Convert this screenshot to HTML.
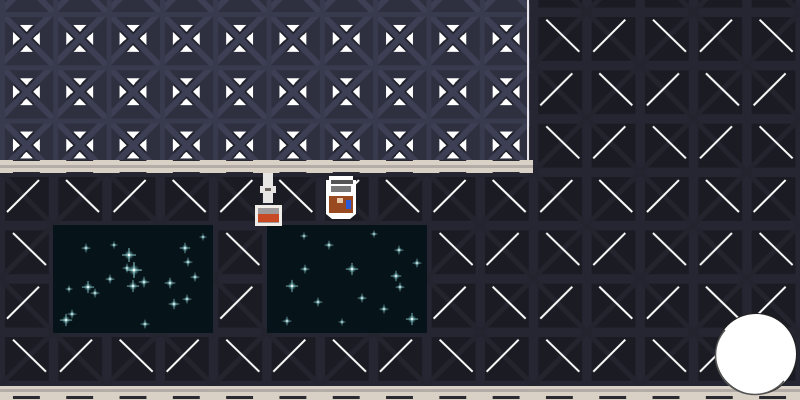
<!DOCTYPE html>
<html><head><style>html,body{margin:0;padding:0;background:#1c1c25;overflow:hidden}svg{display:block}</style></head>
<body>
<svg width="800" height="400" viewBox="0 0 800 400" xmlns="http://www.w3.org/2000/svg" shape-rendering="crispEdges">
<defs>
<pattern id="dark" x="0" y="-41.3" width="106.66" height="106.66" patternUnits="userSpaceOnUse">
<rect width="106.66" height="106.66" fill="#262632"/>
<g fill="#1b1b23">
<rect x="5" y="5" width="44" height="44"/><rect x="58.3" y="5" width="44" height="44"/>
<rect x="5" y="58.3" width="44" height="44"/><rect x="58.3" y="58.3" width="44" height="44"/>
</g>
<g stroke="#24242f" stroke-width="5" shape-rendering="auto">
<line x1="0" y1="0" x2="53.3" y2="53.3"/><line x1="106.6" y1="0" x2="53.3" y2="53.3"/>
<line x1="0" y1="106.6" x2="53.3" y2="53.3"/><line x1="106.6" y1="106.6" x2="53.3" y2="53.3"/>
</g>
<g stroke="#fff" stroke-width="2" shape-rendering="auto">
<line x1="39" y1="8" x2="7" y2="40"/>
<line x1="66" y1="8" x2="99" y2="40"/>
<line x1="13" y1="61" x2="46" y2="93"/>
<line x1="92" y1="61" x2="60" y2="93"/>
</g>
</pattern>
<pattern id="top" x="0" y="-41.3" width="53.3" height="53.3" patternUnits="userSpaceOnUse">
<rect width="53.3" height="53.3" fill="#2e3040"/>
<rect x="14" y="14" width="25" height="25" fill="#1f2029"/>
<g stroke="#3d3f55" stroke-width="6" shape-rendering="auto"><line x1="0" y1="0" x2="53.3" y2="53.3"/><line x1="53.3" y1="0" x2="0" y2="53.3"/></g>
<g fill="#fff"><path d="M20 13h13l-6.5 7z"/><path d="M20 40h13l-6.5-7z"/><path d="M13 20v13l7-6.5z"/><path d="M40 20v13l-7-6.5z"/></g>
<rect x="0" y="0" width="53.3" height="5" fill="#383a4e"/>
<rect x="0" y="0" width="5" height="53.3" fill="#383a4e"/>
</pattern>
<pattern id="floor" x="0" y="0" width="53.3" height="14" patternUnits="userSpaceOnUse">
<rect width="53.3" height="14" fill="#d9d1c6"/>
<rect x="13" y="4" width="27" height="3" fill="#2a2a30"/>
<rect x="0" y="11" width="53.3" height="3" fill="#b4aca6"/>
</pattern>
<radialGradient id="glow"><stop offset="0" stop-color="#d0fafa" stop-opacity="1"/><stop offset="1" stop-color="#3a8a90" stop-opacity="0"/></radialGradient>
<symbol id="s" viewBox="-8 -8 16 16" overflow="visible"><circle r="5" fill="url(#glow)"/><path d="M0 -7V7M-7 0H7" stroke="#a8eef0" stroke-width="1" opacity=".8"/><rect x="-1" y="-1" width="2" height="2" fill="#fff"/></symbol>
</defs>
<rect width="800" height="400" fill="url(#dark)"/>
<rect x="0" y="0" width="530" height="160" fill="url(#top)"/>
<rect x="527" y="0" width="2" height="160" fill="#e8e4ea"/>
<rect x="0" y="160" width="533" height="13" fill="url(#floor)"/>
<rect x="0" y="386" width="800" height="14" fill="url(#floor)"/>
<g fill="#061318">
<rect x="53" y="225" width="160" height="108"/>
<rect x="267" y="225" width="160" height="108"/>
</g>
<g shape-rendering="auto">
<use href="#s" x="122" y="263" width="10" height="10"/>
<use href="#s" x="81" y="243" width="10" height="10"/>
<use href="#s" x="121" y="247" width="16" height="16"/>
<use href="#s" x="125" y="261" width="18" height="18"/>
<use href="#s" x="81" y="280" width="14" height="14"/>
<use href="#s" x="126" y="279" width="14" height="14"/>
<use href="#s" x="138" y="276" width="12" height="12"/>
<use href="#s" x="90" y="288" width="10" height="10"/>
<use href="#s" x="59" y="313" width="14" height="14"/>
<use href="#s" x="67" y="309" width="10" height="10"/>
<use href="#s" x="105" y="274" width="10" height="10"/>
<use href="#s" x="179" y="242" width="12" height="12"/>
<use href="#s" x="182" y="294" width="10" height="10"/>
<use href="#s" x="168" y="298" width="12" height="12"/>
<use href="#s" x="164" y="277" width="12" height="12"/>
<use href="#s" x="183" y="257" width="10" height="10"/>
<use href="#s" x="190" y="272" width="10" height="10"/>
<use href="#s" x="110" y="241" width="8" height="8"/>
<use href="#s" x="140" y="319" width="10" height="10"/>
<use href="#s" x="199" y="233" width="8" height="8"/>
<use href="#s" x="65" y="285" width="8" height="8"/>
<use href="#s" x="285" y="279" width="14" height="14"/>
<use href="#s" x="300" y="264" width="10" height="10"/>
<use href="#s" x="345" y="262" width="14" height="14"/>
<use href="#s" x="357" y="293" width="10" height="10"/>
<use href="#s" x="390" y="270" width="12" height="12"/>
<use href="#s" x="394" y="245" width="10" height="10"/>
<use href="#s" x="324" y="240" width="10" height="10"/>
<use href="#s" x="379" y="304" width="10" height="10"/>
<use href="#s" x="405" y="312" width="14" height="14"/>
<use href="#s" x="282" y="316" width="10" height="10"/>
<use href="#s" x="313" y="297" width="10" height="10"/>
<use href="#s" x="370" y="230" width="8" height="8"/>
<use href="#s" x="412" y="258" width="10" height="10"/>
<use href="#s" x="338" y="318" width="8" height="8"/>
<use href="#s" x="300" y="232" width="8" height="8"/>
<use href="#s" x="395" y="282" width="10" height="10"/>
</g>
<rect x="263" y="173" width="10" height="30" fill="#e8e6e4"/>
<rect x="260" y="186" width="16" height="7" fill="#e8e6e4"/><rect x="265" y="188" width="6" height="3" fill="#6a6460"/>
<rect x="255" y="205" width="27" height="21" fill="#f0ece8"/><rect x="258" y="208" width="21" height="15" fill="#9e9a9c"/><rect x="258" y="214" width="21" height="8" fill="#c84a24"/>
<g shape-rendering="auto">
<path d="M329 176h24v4h3v34l-6 5h-18l-6-5v-34h3z" fill="#fff"/>
<rect x="331" y="180" width="22" height="4" fill="#555"/>
<rect x="331" y="186" width="20" height="6" fill="#777"/>
<rect x="329" y="196" width="24" height="17" fill="#9a4a20"/>
<rect x="337" y="198" width="6" height="5" fill="#e8c8a8"/>
<rect x="346" y="200" width="5" height="9" fill="#2a5ad8"/>
<circle cx="756" cy="354" r="41" fill="#222"/>
<circle cx="756" cy="354" r="40" fill="#fff"/>
<path d="M725 330A37 37 0 0 0 784 381" stroke="#555" stroke-width="1.5" fill="none"/>
<circle cx="756" cy="354" r="35" fill="#fff"/>
</g>
</svg>
</body></html>
